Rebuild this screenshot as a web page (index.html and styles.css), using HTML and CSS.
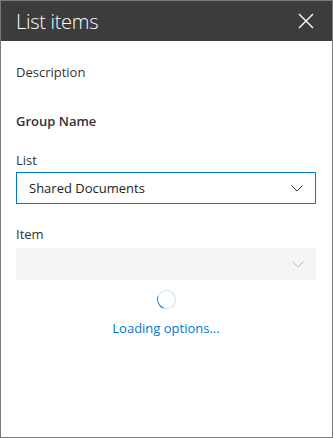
FILE: index.html
```html
<!DOCTYPE html>
<html lang="en">
<head>
  <meta charset="UTF-8">
  <title>List items</title>
  <link rel="stylesheet" href="styles.css">
</head>
<body>
  <div class="panel">
    <div class="panel-header">
      <span class="panel-title">List items</span>
      <button class="close-button" aria-label="Close">
        <svg width="16" height="16" viewBox="0 0 16 16">
          <path d="M1 1 L15 15 M15 1 L1 15" stroke="#fff" stroke-width="1.4" fill="none"/>
        </svg>
      </button>
    </div>

    <div class="panel-body">
      <p class="description">Description</p>
      <h3 class="group-name">Group Name</h3>

      <label class="field-label">List</label>
      <div class="dropdown active">
        <span class="dropdown-text">Shared Documents</span>
        <svg class="chevron" width="12" height="7" viewBox="0 0 12 7">
          <path d="M0.5 0.5 L6 6 L11.5 0.5" stroke="#333" stroke-width="1" fill="none"/>
        </svg>
      </div>

      <label class="field-label item-label">Item</label>
      <div class="dropdown disabled">
        <span class="dropdown-text"></span>
        <svg class="chevron" width="12" height="7" viewBox="0 0 12 7">
          <path d="M0.5 0.5 L6 6 L11.5 0.5" stroke="#bbb" stroke-width="1" fill="none"/>
        </svg>
      </div>

      <div class="loading">
        <div class="spinner"></div>
        <p class="loading-text">Loading options...</p>
      </div>
    </div>
  </div>
</body>
</html>
```

FILE: styles.css
```css
/* General Styles */
body {
  margin: 0;
  font-family: 'Open Sans', 'Noto Sans', sans-serif;
  background: #fff;
}

.panel {
  width: 333px;
  height: 438px;
  box-sizing: border-box;
  border: 1px solid #7a7a7a;
  background: #fff;
}

.panel-header {
  height: 40px;
  background: #3c3c3c;
  display: flex;
  align-items: center;
  justify-content: space-between;
  padding: 0 18px 0 15px;
}

.panel-title {
  color: #fff;
  font-size: 20px;
  font-weight: 300;
  letter-spacing: -0.3px;
}

.close-button {
  background: none;
  border: none;
  padding: 0;
  width: 16px;
  height: 16px;
  display: flex;
  cursor: pointer;
}

.panel-body {
  padding: 0 16px 0 15px;
  color: #333;
}

.description {
  margin: 21px 0 0;
  font-size: 13px;
  line-height: 20px;
}

.group-name {
  margin: 29px 0 0;
  font-size: 13px;
  font-weight: 600;
  line-height: 20px;
}

.field-label {
  display: block;
  margin-top: 19px;
  font-size: 13px;
  line-height: 20px;
  margin-bottom: 2px;
}

.item-label {
  margin-top: 20px;
  margin-bottom: 4px;
}

.dropdown {
  height: 32px;
  box-sizing: border-box;
  display: flex;
  align-items: center;
  justify-content: space-between;
  padding: 0 12px 0 12px;
}

.dropdown.active {
  border: 1px solid #0078d4;
}

.dropdown.disabled {
  background: #f4f4f4;
}

.dropdown-text {
  font-size: 13px;
  color: #222;
}

.loading {
  display: flex;
  flex-direction: column;
  align-items: center;
  padding-top: 10px;
}

.spinner {
  width: 17px;
  height: 17px;
  border-radius: 50%;
  border: 1.5px solid #c7e0f4;
  border-left-color: #0078d4;
  transform: rotate(-25deg);
}

.loading-text {
  margin: 9px 0 0;
  font-size: 13px;
  line-height: 20px;
  color: #0078d4;
}
```
